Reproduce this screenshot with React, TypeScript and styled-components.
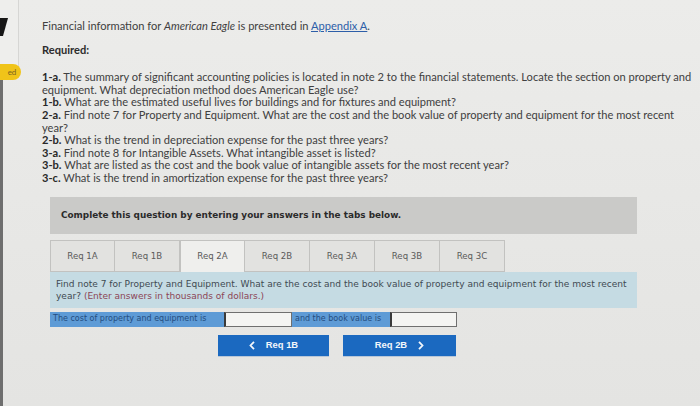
import React from "react";
import styled, { createGlobalStyle } from "styled-components";

const Global = createGlobalStyle`
  html, body { margin: 0; padding: 0; }
  body { background: #e8e8e6; }
`;

const Page = styled.div`
  display: flex;
  width: 700px;
  height: 406px;
  overflow: hidden;
  background: linear-gradient(180deg, #ececea 0%, #e7e7e5 60%, #e4e4e2 100%);
  font-family: Lato, "Open Sans", sans-serif;
  color: #404040;
`;

const Gutter = styled.div`
  width: 39px;
  flex: none;
  border-left: 3px solid #6e6e6e;
  display: flex;
  flex-direction: column;
`;

const EdgePanel = styled.div`
  width: 19px;
  height: 68px;
  border: 1px solid #d6d6d4;
  border-left: none;
  border-top: none;
  background: #eeeeec;
  display: flex;
  align-items: flex-start;
  padding-top: 18px;
  margin-left: -3px;
  box-sizing: border-box;
`;

const Badge = styled.div`
  width: 21px;
  height: 16px;
  margin-top: -4px;
  margin-left: -3px;
  background: #f0c419;
  border-radius: 0 8px 8px 0;
  font-size: 8px;
  color: #7a6320;
  display: flex;
  align-items: center;
  justify-content: center;
  padding-left: 3px;
  box-sizing: border-box;
`;

const Main = styled.div`
  flex: 1;
  padding-top: 20px;
  font-size: 11.1px;
  line-height: 12.6px;
`;

const Intro = styled.p`
  margin: 0;
`;

const Link = styled.a`
  color: #2d5ea8;
  text-decoration: underline;
`;

const Heading = styled.p`
  margin: 11.5px 0 0;
  font-weight: 700;
  color: #2d2d2d;
`;

const List = styled.div`
  margin-top: 14.5px;
  width: 657px;
`;

const Item = styled.div``;

const Num = styled.b`
  color: #282828;
`;

const Question = styled.div`
  margin: 12.5px 0 0 8px;
  width: 587px;
  font-family: "DejaVu Sans", Verdana, sans-serif;
`;

const Banner = styled.div`
  height: 37px;
  background: #cacac8;
  display: flex;
  align-items: center;
  padding-left: 11px;
  font-weight: 700;
  font-size: 8.9px;
  color: #2b2b2b;
`;

const Tabs = styled.div`
  margin-top: 6px;
  display: flex;
  height: 32px;
`;

const Tab = styled.div<{ $active?: boolean }>`
  width: 65px;
  box-sizing: border-box;
  border: 1px solid #c2c2c0;
  border-left-width: ${(p) => (p.$active ? "1px" : "0")};
  border-bottom: ${(p) => (p.$active ? "none" : "1px solid #c2c2c0")};
  background: ${(p) => (p.$active ? "#efefed" : "#e2e2e0")};
  display: flex;
  align-items: center;
  justify-content: center;
  font-size: 8.6px;
  color: #5a5a5a;
  &:first-child { border-left-width: 1px; }
`;

const Panel = styled.div`
  background: #c5dbe3;
  padding: 6px 8px 6px 6px;
  font-size: 9.05px;
  line-height: 12px;
  color: #3f4a52;
`;

const Note = styled.span`
  color: #8c4556;
`;

const AnswerRow = styled.div`
  margin-top: 4px;
  display: flex;
  height: 15px;
  font-size: 8px;
`;

const Label = styled.div<{ $w: number }>`
  width: ${(p) => p.$w}px;
  background: #5e9bd6;
  color: #244d80;
  display: flex;
  align-items: center;
  padding-left: 3px;
  box-sizing: border-box;
  white-space: nowrap;
`;

const Input = styled.div<{ $w: number }>`
  width: ${(p) => p.$w}px;
  background: #f4f4f2;
  border: 1px solid #6f6f6f;
  border-left: 2px solid #3a3a3a;
  box-sizing: border-box;
`;

const Nav = styled.div`
  margin-top: 8px;
  display: flex;
  gap: 14px;
  padding-left: 168px;
`;

const NavButton = styled.div<{ $w: number }>`
  width: ${(p) => p.$w}px;
  height: 21px;
  background: #1b69c0;
  color: #f2f6fb;
  font-family: "Liberation Sans", Arial, sans-serif;
  font-weight: 700;
  font-size: 9.4px;
  display: flex;
  align-items: center;
  justify-content: center;
  gap: 11px;
  box-shadow: 0 1px 0 #b8c7d8;
`;

const tabs = ["Req 1A", "Req 1B", "Req 2A", "Req 2B", "Req 3A", "Req 3B", "Req 3C"];

const ChevronLeft = () => (
  <svg width="6" height="9" viewBox="0 0 6 9">
    <polyline points="5,0.8 1.5,4.5 5,8.2" fill="none" stroke="#f2f6fb" strokeWidth="1.8" />
  </svg>
);

const ChevronRight = () => (
  <svg width="6" height="9" viewBox="0 0 6 9">
    <polyline points="1,0.8 4.5,4.5 1,8.2" fill="none" stroke="#f2f6fb" strokeWidth="1.8" />
  </svg>
);

export default function App() {
  return (
    <>
      <Global />
      <Page>
        <Gutter>
          <EdgePanel>
            <svg width="8" height="18" viewBox="0 0 8 18">
              <polygon points="0,0 8,0 3,18 0,18" fill="#161616" />
            </svg>
          </EdgePanel>
          <Badge>ed</Badge>
        </Gutter>
        <Main>
          <Intro>
            Financial information for <i>American Eagle</i> is presented in <Link>Appendix A</Link>.
          </Intro>
          <Heading>Required:</Heading>
          <List>
            <Item>
              <Num>1-a.</Num> The summary of significant accounting policies is located in note 2 to the financial statements. Locate the section on property and equipment. What depreciation method does American Eagle use?
            </Item>
            <Item>
              <Num>1-b.</Num> What are the estimated useful lives for buildings and for fixtures and equipment?
            </Item>
            <Item>
              <Num>2-a.</Num> Find note 7 for Property and Equipment. What are the cost and the book value of property and equipment for the most recent year?
            </Item>
            <Item>
              <Num>2-b.</Num> What is the trend in depreciation expense for the past three years?
            </Item>
            <Item>
              <Num>3-a.</Num> Find note 8 for Intangible Assets. What intangible asset is listed?
            </Item>
            <Item>
              <Num>3-b.</Num> What are listed as the cost and the book value of intangible assets for the most recent year?
            </Item>
            <Item>
              <Num>3-c.</Num> What is the trend in amortization expense for the past three years?
            </Item>
          </List>
          <Question>
            <Banner>Complete this question by entering your answers in the tabs below.</Banner>
            <Tabs>
              {tabs.map((t) => (
                <Tab key={t} $active={t === "Req 2A"}>
                  {t}
                </Tab>
              ))}
            </Tabs>
            <Panel>
              Find note 7 for Property and Equipment. What are the cost and the book value of property and equipment for the most recent year? <Note>(Enter answers in thousands of dollars.)</Note>
            </Panel>
            <AnswerRow>
              <Label $w={174}>The cost of property and equipment is</Label>
              <Input $w={68} />
              <Label $w={98}>and the book value is</Label>
              <Input $w={67} />
            </AnswerRow>
            <Nav>
              <NavButton $w={111}>
                <ChevronLeft />
                <span>Req 1B</span>
              </NavButton>
              <NavButton $w={113}>
                <span>Req 2B</span>
                <ChevronRight />
              </NavButton>
            </Nav>
          </Question>
        </Main>
      </Page>
    </>
  );
}
